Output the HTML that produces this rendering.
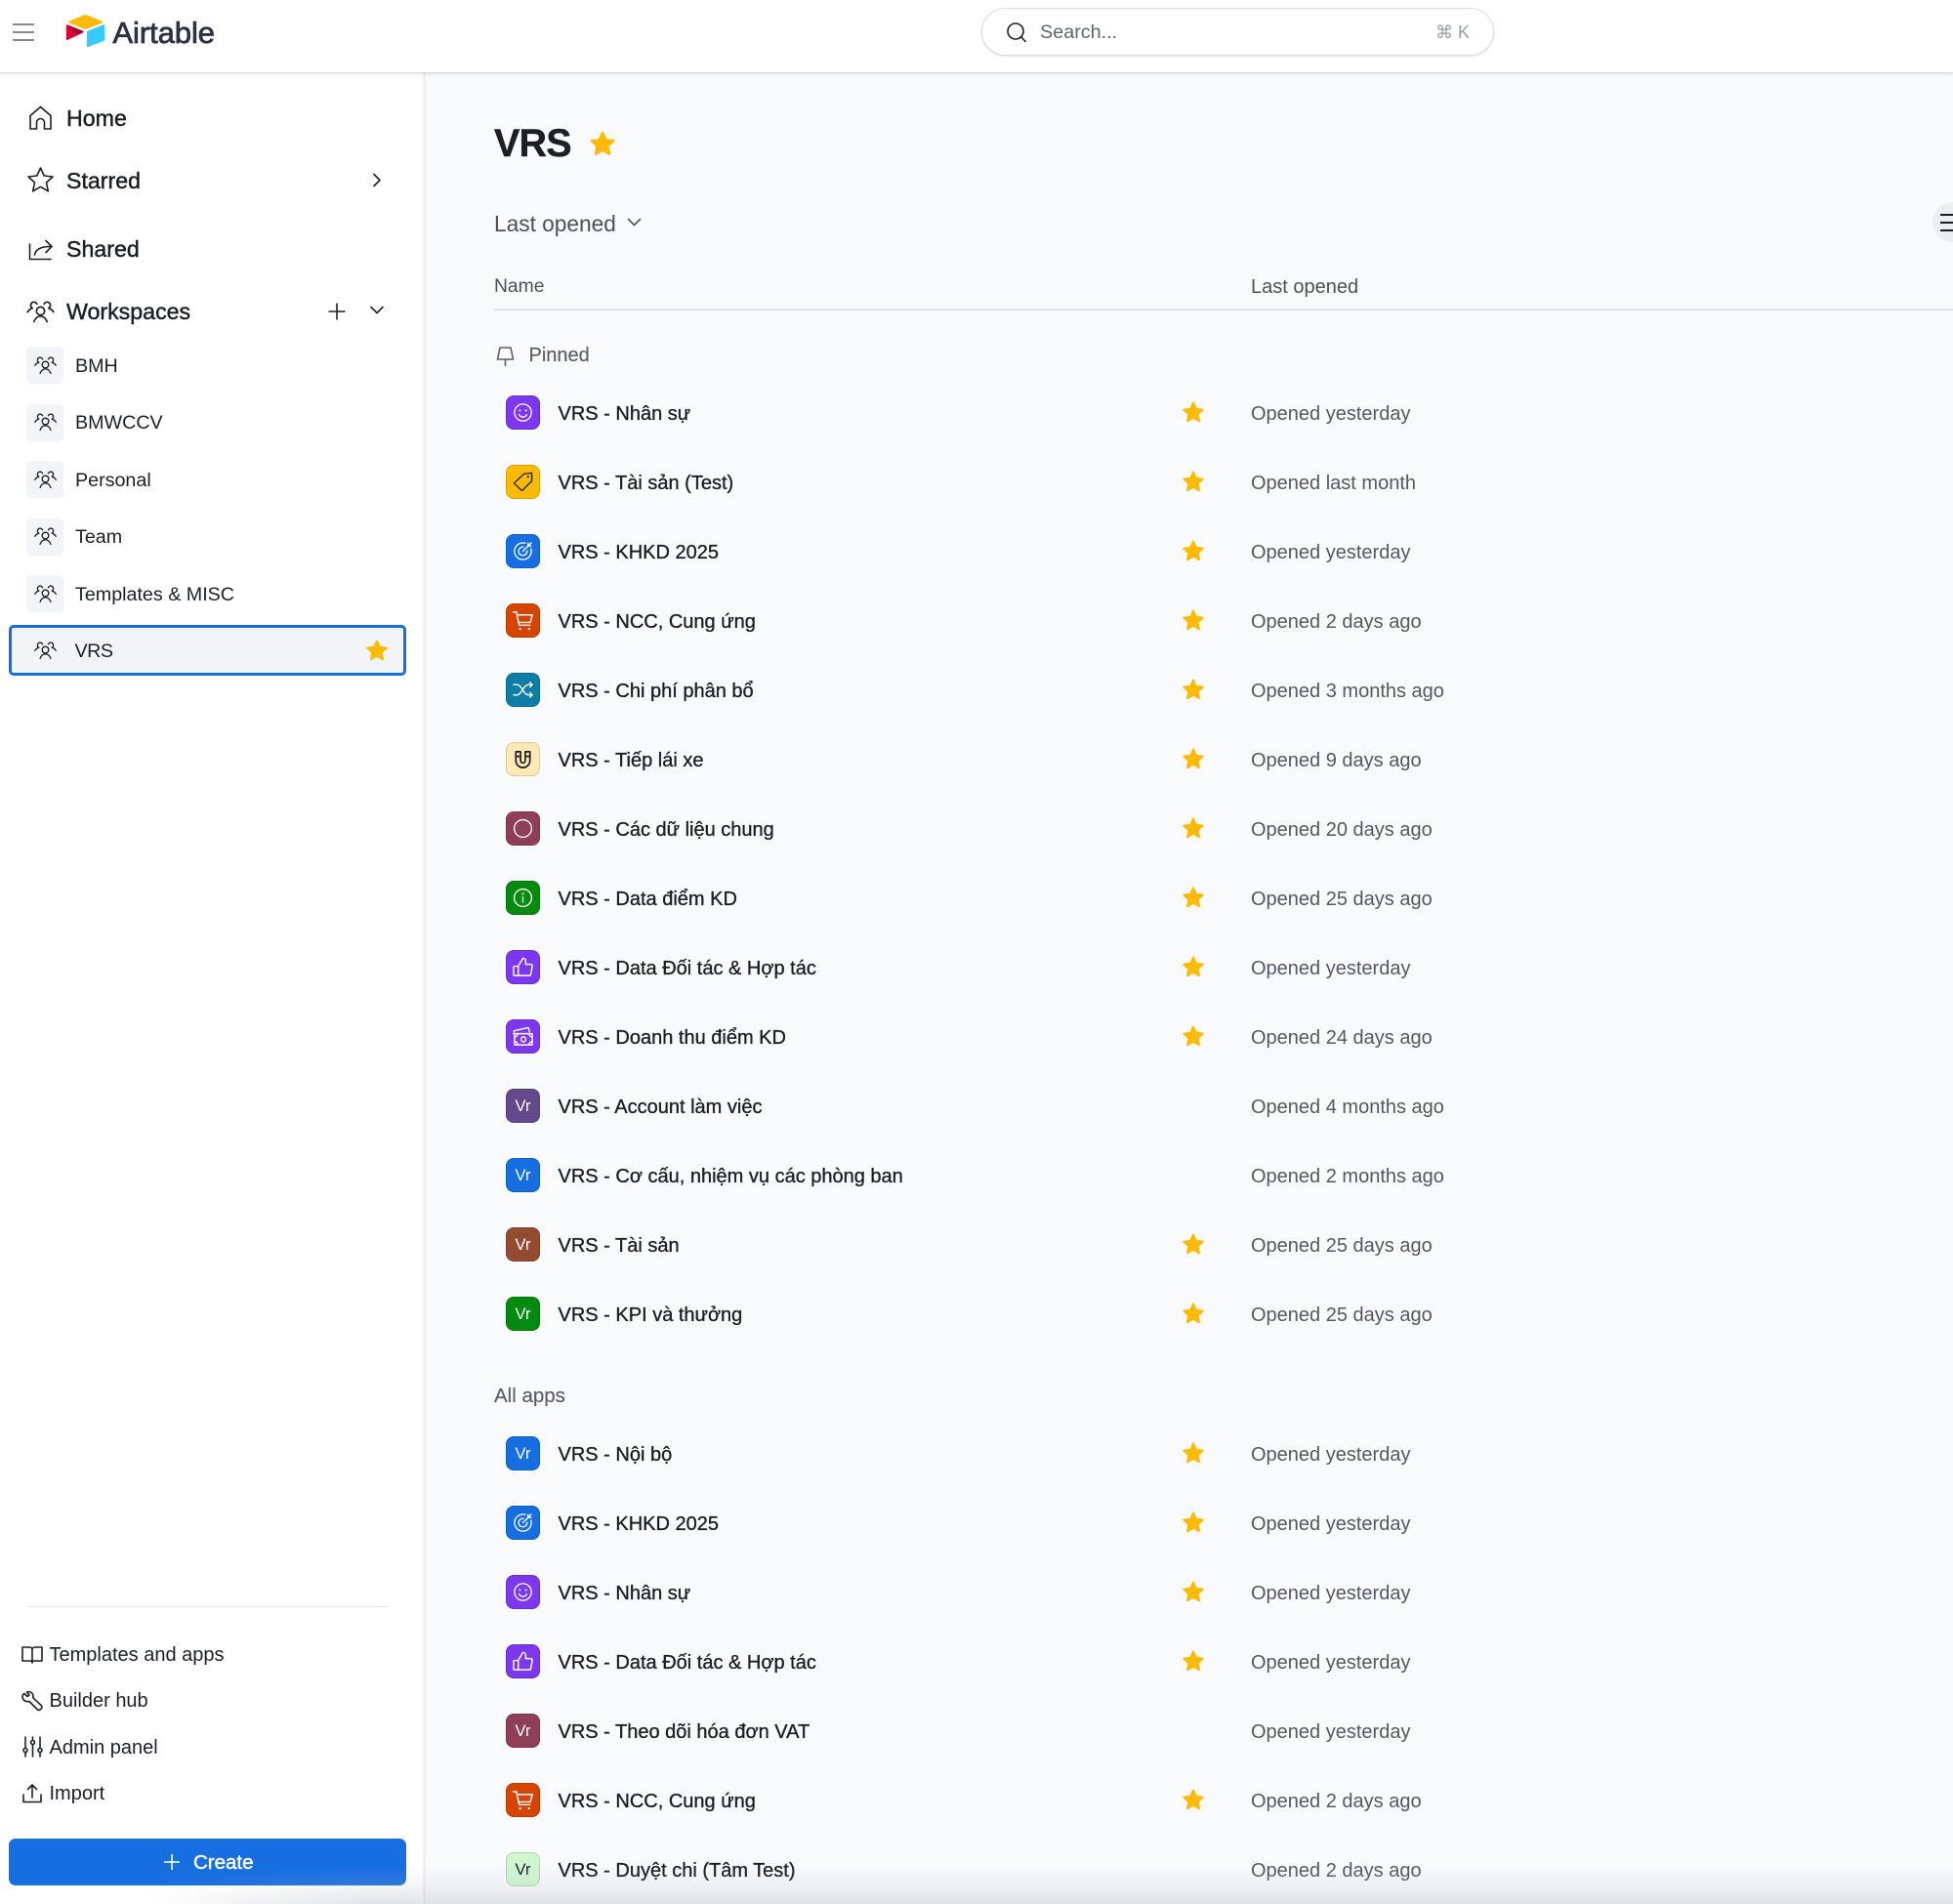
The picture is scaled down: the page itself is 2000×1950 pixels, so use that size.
<!DOCTYPE html>
<html lang="vi"><head><meta charset="utf-8"><title>VRS</title>
<style>
*{box-sizing:border-box}
html,body{margin:0;padding:0}
body{width:2000px;height:1950px;position:relative;overflow:hidden;background:#f9fafc;font-family:"Liberation Sans","Noto Sans CJK JP",sans-serif;color:#1d1f25}
.a{position:absolute;white-space:nowrap}
.v{line-height:30px;height:30px}
.s{fill:none;stroke:currentColor;stroke-width:1.6;stroke-linecap:round;stroke-linejoin:round}
#side{position:absolute;left:0;top:0;width:436px;height:1950px;background:#fff;border-right:3px solid #eef0f2}
#top{position:absolute;left:0;top:0;width:2000px;height:75px;background:#fff;border-bottom:1px solid #dcdde0;box-shadow:0 1px 3px rgba(0,0,0,.1)}
.nav{left:68px;font-size:23.2px;-webkit-text-stroke:.45px #1d1f25}
.w{left:77px;font-size:19.7px}
.tile{position:absolute;left:27px;width:38px;height:38px;border-radius:5px;background:#f2f4f8}
.b{left:50.5px;font-size:20px}
.r{position:absolute;left:0;width:2000px;height:71px}
.t{position:absolute;left:518px;top:18px;width:35px;height:35px;padding-top:2px;border-radius:8px;border:1px solid rgba(0,0,0,.14);box-shadow:0 0 0 1px #fff;color:#fff;display:flex;align-items:center;justify-content:center;font-size:16.5px;font-style:normal}
.t svg{width:23px;height:23px;margin-top:-2px}
.n{position:absolute;left:571.5px;top:22px;line-height:30px;font-size:20px;-webkit-text-stroke:.35px #1d1f25;white-space:nowrap}
.d{position:absolute;left:1281px;top:22px;line-height:30px;font-size:20px;color:#55585f;white-space:nowrap}
.st{position:absolute;left:1210px;top:23px;width:24px;height:24px}
</style></head><body>
<svg width="0" height="0" style="position:absolute">
<defs>
<symbol id="star" viewBox="0 0 24 24"><path fill="#ffba05" stroke="#ffba05" stroke-width="2" stroke-linejoin="round" d="M12 2.5l2.9 6.3 6.8.8-5 4.7 1.3 6.9-6-3.4-6 3.4 1.3-6.9-5-4.7 6.8-.8z"/></symbol>
<symbol id="users" viewBox="0 0 24 24"><g class="s" style="stroke-width:1.3"><circle cx="12" cy="12" r="3.2"/><path d="M6.8 20.5c1-2.8 2.9-4.3 5.2-4.3s4.2 1.500 5.200 4.300"/><path d="M9.200 6.500a2.600 2.600 0 1 0-3.600 3.300c-1.700.4-3 1.400-3.900 3"/><path d="M14.800 6.500a2.600 2.600 0 1 1 3.600 3.300c1.700.4 3 1.400 3.900 3"/></g></symbol>
<symbol id="smile" viewBox="0 0 24 24"><g class="s" style="stroke-width:1.400"><circle cx="12" cy="12" r="9"/><path d="M7.800 14c1 1.900 2.500 2.800 4.200 2.800s3.200-.9 4.200-2.800"/></g><circle cx="8.800" cy="9.800" r="1.100" fill="currentColor"/><circle cx="15.200" cy="9.800" r="1.100" fill="currentColor"/></symbol>
<symbol id="tag" viewBox="0 0 24 24"><path class="s" style="stroke-width:1.400" d="M2.500 13.500L13 3.500l8.500-1v8.500L11 21.500z"/><circle cx="17.500" cy="6.500" r="1.100" fill="currentColor"/></symbol>
<symbol id="target" viewBox="0 0 24 24"><g class="s" style="stroke-width:1.400"><path d="M20.600 9.500A9 9 0 1 1 14.500 3.400"/><path d="M16.400 11.500A4.500 4.500 0 1 1 12.500 7.600"/><path d="M12 12L21 3M17.500 3.500V6.500H20.500"/></g></symbol>
<symbol id="cart" viewBox="0 0 24 24"><g class="s" style="stroke-width:1.500"><path d="M1.500 3H5L8 17H19.500"/><path d="M5.600 6H22L20 14H7.200"/></g><circle cx="9" cy="21" r="1.200" fill="currentColor"/><circle cx="18.500" cy="21" r="1.200" fill="currentColor"/></symbol>
<symbol id="shuffle" viewBox="0 0 24 24"><g class="s" style="stroke-width:1.400"><path d="M2 6.500h3.500c5.500 0 6.500 11 13 11H22"/><path d="M2 17.500h3.500c5.500 0 6.500-11 13-11H22"/><path d="M19.500 4L22 6.500 19.500 9M19.500 15L22 17.500 19.500 20"/></g></symbol>
<symbol id="magnet" viewBox="0 0 24 24"><g class="s" style="stroke-width:1.800"><path d="M4.500 4h5v9.500a2.500 2.500 0 0 0 5 0V4h5v9.500a7.500 7.500 0 0 1-15 0z"/><path d="M4.500 9h5M14.500 9h5"/></g></symbol>
<symbol id="circle" viewBox="0 0 24 24"><circle class="s" cx="12" cy="12" r="9.300" style="stroke-width:1.400"/></symbol>
<symbol id="info" viewBox="0 0 24 24"><g class="s" style="stroke-width:1.400"><circle cx="12" cy="12" r="9.300"/><path d="M12 11v6"/></g><circle cx="12" cy="7.800" r="1.100" fill="currentColor"/></symbol>
<symbol id="thumb" viewBox="0 0 24 24"><g class="s" style="stroke-width:1.500"><rect x="2" y="11" width="5" height="10" rx=".8"/><path d="M7 11l5-8.500c1.800 0 3 1.300 3 3V9h5.500c1 0 1.700 1 1.500 2l-1.500 8.500c-.2 1-.9 1.500-1.700 1.500H7"/></g></symbol>
<symbol id="money" viewBox="0 0 24 24"><g class="s" style="stroke-width:1.500"><path d="M2 9L2.500 6 18 2.500 19 7"/><rect x="3" y="9" width="19" height="12" rx=".8"/><circle cx="12.500" cy="15" r="2.600"/><path d="M3 12.500c2 0 3.500-1.500 3.500-3.500M22 12.500c-2 0-3.500-1.500-3.500-3.500M3 17.500c2 0 3.500 1.500 3.500 3.500M22 17.500c-2 0-3.500 1.500-3.500 3.500"/></g></symbol>
</defs></svg>

<div id="side"></div>
<div id="top"></div>

<!-- header -->
<svg class="a" style="left:13px;top:24px;color:#8a8a8a" width="22" height="18" viewBox="0 0 22 18"><path d="M0 1h22M0 9h22M0 17h22" stroke="currentColor" stroke-width="2"/></svg>
<svg class="a" style="left:67px;top:15px" width="41" height="35" viewBox="0 0 200 170"><path fill="#FFBA05" d="M89.900 2.700L18.100 32.400c-4 1.700-3.900 7.300.1 8.900l72.100 28.600c6.300 2.500 13.400 2.500 19.700 0l72.100-28.600c4-1.600 4.100-7.200.1-8.900L110.400 2.700c-6.500-2.700-13.900-2.700-20.500 0"/><path fill="#39CAFF" d="M106.600 85.600v71.400c0 3.400 3.400 5.700 6.600 4.500l80.400-31.200c1.800-.7 3-2.500 3-4.400V54.500c0-3.400-3.400-5.700-6.600-4.500l-80.400 31.200c-1.800.7-3 2.500-3 4.400"/><path fill="#DC043B" d="M87.800 89.300l-23.900 11.500-2.400 1.200L11.100 126.100c-3.200 1.600-7.300-.8-7.300-4.300V54.700c0-1.300.7-2.400 1.600-3.200.4-.4.8-.7 1.200-.9 1.200-.7 2.900-.9 4.400-.3l76.400 30.300c3.900 1.500 4.200 7 .4 8.700"/><path fill="#000" opacity=".25" d="M87.800 89.300l-23.900 11.500L5.400 51.500c.4-.4.8-.7 1.200-.9 1.200-.7 2.900-.9 4.400-.3l76.400 30.300c3.900 1.500 4.200 7 .4 8.700"/></svg>
<div class="a" style="left:115.500px;top:14.500px;line-height:38px;font-size:30.800px;color:#2d3340;-webkit-text-stroke:.8px #2d3340">Airtable</div>

<div class="a" style="left:1005px;top:8px;width:525px;height:49px;border-radius:25px;background:#fff;border:1px solid #dcdde0;box-shadow:0 1px 2px rgba(0,0,0,.12)"></div>
<svg class="a s" style="left:1030px;top:22px;color:#1d1f25" width="22" height="22" viewBox="0 0 22 22"><circle cx="10" cy="10" r="8"/><path d="M16 16l4 4.500"/></svg>
<div class="a v" style="left:1065px;top:18px;font-size:19.800px;color:#60646e">Search...</div>
<div class="a v" style="left:1470px;top:18px;font-size:18px;color:#9a9da5;font-family:'Liberation Sans','DejaVu Sans',sans-serif">⌘ K</div>

<!-- sidebar nav -->
<svg class="a s" style="left:28px;top:107px" width="27" height="27" viewBox="0 0 27 27"><path d="M3 25V11.500L13.500 2.500 24 11.500V25h-6.500v-6.500a4 4 0 0 0-8 0V25z"/></svg>
<div class="a v nav" style="top:106px">Home</div>
<svg class="a s" style="left:27px;top:170px" width="29" height="28" viewBox="0 0 29 28"><path d="M14.500 2l3.700 8 8.800 1-6.500 6 1.800 8.800-7.800-4.500-7.800 4.500L8.500 17 2 11l8.800-1z"/></svg>
<div class="a v nav" style="top:170px">Starred</div>
<svg class="a s" style="left:379px;top:177px" width="14" height="15" viewBox="0 0 14 15"><path d="M4 1.500l6 6-6 6"/></svg>
<svg class="a s" style="left:28px;top:243px" width="27" height="24" viewBox="0 0 27 24"><path d="M2.500 7V22.500H24"/><path d="M7.500 18c1-5.500 6-8.800 17.500-8.500M19 3.500L25 9.500 19 15.500"/></svg>
<div class="a v nav" style="top:240px">Shared</div>
<svg class="a" style="left:26px;top:303px;color:#1d1f25" width="31" height="31" viewBox="0 0 24 24"><use href="#users"/></svg>
<div class="a v nav" style="top:304px">Workspaces</div>
<svg class="a" style="left:335px;top:309px" width="20" height="20" viewBox="0 0 20 20"><path d="M10 1.500v17M1.500 10h17" stroke="#1d1f25" stroke-width="1.600"/></svg>
<svg class="a s" style="left:378px;top:311px" width="16" height="14" viewBox="0 0 16 14"><path d="M2 3.500l6 6 6-6"/></svg>

<!-- workspaces -->
<div class="tile" style="top:355px"></div><svg class="a" style="left:34px;top:361px" width="25" height="25" viewBox="0 0 24 24"><use href="#users"/></svg><div class="a v w" style="top:360px">BMH</div>
<div class="tile" style="top:414px"></div><svg class="a" style="left:34px;top:419px" width="25" height="25" viewBox="0 0 24 24"><use href="#users"/></svg><div class="a v w" style="top:418px">BMWCCV</div>
<div class="tile" style="top:472px"></div><svg class="a" style="left:34px;top:478px" width="25" height="25" viewBox="0 0 24 24"><use href="#users"/></svg><div class="a v w" style="top:477px">Personal</div>
<div class="tile" style="top:531px"></div><svg class="a" style="left:34px;top:536px" width="25" height="25" viewBox="0 0 24 24"><use href="#users"/></svg><div class="a v w" style="top:535px">Team</div>
<div class="tile" style="top:589px"></div><svg class="a" style="left:34px;top:595px" width="25" height="25" viewBox="0 0 24 24"><use href="#users"/></svg><div class="a v w" style="top:594px">Templates &amp; MISC</div>
<div class="a" style="left:9px;top:640px;width:407px;height:52px;background:#f2f4f8;border:3px solid #166ee1;border-radius:5px"></div>
<svg class="a" style="left:34px;top:653px" width="25" height="25" viewBox="0 0 24 24"><use href="#users"/></svg><div class="a v w" style="top:652px;left:76.500px;letter-spacing:-.5px">VRS</div>
<svg class="a" style="left:374px;top:654px" width="24" height="24"><use href="#star"/></svg>

<!-- sidebar bottom -->
<div class="a" style="left:27px;top:1645px;width:371px;height:1px;background:#e3e4e7"></div>
<svg class="a s" style="left:22px;top:1685px" width="22" height="19" viewBox="0 0 22 19"><path d="M1 2h7c1.800 0 3 1 3 2.500 0-1.500 1.200-2.500 3-2.500h7v14h-8c-1.200 0-2 .7-2 2 0-1.300-.8-2-2-2H1zM11 4.500V18"/></svg>
<div class="a v b" style="top:1680px">Templates and apps</div>
<svg class="a s" style="left:22px;top:1731px" width="22" height="22" viewBox="0 0 22 22"><path d="M3 3.500L6 6.500 8 5 5.500 2c2.500-1 5.500.2 6.300 2.800.3 1 .3 2 0 2.900L20.500 16a1.800 1.800 0 0 1 0 2.500l-1.500 1.500a1.800 1.800 0 0 1-2.500 0L8 11.500c-3.500 1-7-1.500-7-5 0-1 .3-2 2-3z"/></svg>
<div class="a v b" style="top:1727px">Builder hub</div>
<svg class="a s" style="left:23px;top:1778px" width="21" height="22" viewBox="0 0 21 22"><path d="M3 1v11M3 17v4M10.500 1v3M10.500 9v12M18 1v11M18 17v4"/><circle cx="3" cy="14.500" r="2"/><circle cx="10.500" cy="6.500" r="2"/><circle cx="18" cy="14.500" r="2"/></svg>
<div class="a v b" style="top:1774.500px">Admin panel</div>
<svg class="a s" style="left:22px;top:1826px" width="22" height="21" viewBox="0 0 22 21"><path d="M2 12v7.500h18V12M11 15V2M6.500 6.500L11 2l4.500 4.500"/></svg>
<div class="a v b" style="top:1822px">Import</div>
<div class="a" style="left:9px;top:1883px;width:407px;height:48px;border-radius:7px;background:#166ee1"></div>
<svg class="a" style="left:167px;top:1898px" width="18" height="18" viewBox="0 0 18 18"><path d="M9 1v16M1 9h16" stroke="#fff" stroke-width="1.600"/></svg>
<div class="a v" style="left:198px;top:1893px;font-size:20.500px;color:#fff;-webkit-text-stroke:.5px #fff">Create</div>

<!-- main -->
<div class="a" style="left:506px;top:122px;line-height:50px;font-size:39.500px;font-weight:700;letter-spacing:-.8px;-webkit-text-stroke:.4px #1d1f25">VRS</div>
<svg class="a" style="left:603px;top:133px" width="28" height="28"><use href="#star"/></svg>
<div class="a v" style="left:506px;top:214px;font-size:22.700px;color:#4d5058">Last opened</div>
<svg class="a s" style="left:641px;top:221px;color:#4d5058" width="17" height="14" viewBox="0 0 17 14"><path d="M2.500 3.500l6 6 6-6"/></svg>
<div class="a" style="left:1979px;top:207px;width:40px;height:41px;border-radius:20px;background:#eceef0"></div>
<svg class="a" style="left:1987px;top:218px" width="13" height="20"><path d="M0 2h13M0 10h13M0 18h13" stroke="#1d1f25" stroke-width="2"/></svg>
<div class="a v" style="left:506px;top:279px;font-size:19.300px;color:#4d5058">Name</div>
<div class="a v" style="left:1281px;top:278.500px;font-size:20px;color:#4d5058">Last opened</div>
<div class="a" style="left:506px;top:316px;width:1494px;height:2px;background:#e1e3e6"></div>
<svg class="a s" style="left:507px;top:354px;color:#5a5f6a" width="21" height="21" viewBox="0 0 21 21"><path d="M5 2h11l2.500 12H2.500zM10.500 14V20.500"/></svg>
<div class="a v" style="left:541.500px;top:349px;font-size:20px;color:#5a5f6a;-webkit-text-stroke:.2px #5a5f6a">Pinned</div>

<div class="r" style="top:387px"><i class="t" style="background:#7c37ef"><svg><use href="#smile"/></svg></i><div class="n">VRS - Nhân sự</div><svg class="st"><use href="#star"/></svg><div class="d">Opened yesterday</div></div>
<div class="r" style="top:458px"><i class="t" style="background:#ffba05;color:#1d1f25"><svg><use href="#tag"/></svg></i><div class="n">VRS - Tài sản (Test)</div><svg class="st"><use href="#star"/></svg><div class="d">Opened last month</div></div>
<div class="r" style="top:529px"><i class="t" style="background:#166ee1"><svg><use href="#target"/></svg></i><div class="n">VRS - KHKD 2025</div><svg class="st"><use href="#star"/></svg><div class="d">Opened yesterday</div></div>
<div class="r" style="top:600px"><i class="t" style="background:#d54401"><svg><use href="#cart"/></svg></i><div class="n">VRS - NCC, Cung ứng</div><svg class="st"><use href="#star"/></svg><div class="d">Opened 2 days ago</div></div>
<div class="r" style="top:671px"><i class="t" style="background:#0f7ea6"><svg><use href="#shuffle"/></svg></i><div class="n">VRS - Chi phí phân bổ</div><svg class="st"><use href="#star"/></svg><div class="d">Opened 3 months ago</div></div>
<div class="r" style="top:742px"><i class="t" style="background:#ffeab6;color:#1d1f25"><svg><use href="#magnet"/></svg></i><div class="n">VRS - Tiếp lái xe</div><svg class="st"><use href="#star"/></svg><div class="d">Opened 9 days ago</div></div>
<div class="r" style="top:813px"><i class="t" style="background:#8f3f58"><svg><use href="#circle"/></svg></i><div class="n">VRS - Các dữ liệu chung</div><svg class="st"><use href="#star"/></svg><div class="d">Opened 20 days ago</div></div>
<div class="r" style="top:884px"><i class="t" style="background:#048a0e"><svg><use href="#info"/></svg></i><div class="n">VRS - Data điểm KD</div><svg class="st"><use href="#star"/></svg><div class="d">Opened 25 days ago</div></div>
<div class="r" style="top:955px"><i class="t" style="background:#7c37ef"><svg><use href="#thumb"/></svg></i><div class="n">VRS - Data Đối tác &amp; Hợp tác</div><svg class="st"><use href="#star"/></svg><div class="d">Opened yesterday</div></div>
<div class="r" style="top:1026px"><i class="t" style="background:#7c37ef"><svg><use href="#money"/></svg></i><div class="n">VRS - Doanh thu điểm KD</div><svg class="st"><use href="#star"/></svg><div class="d">Opened 24 days ago</div></div>
<div class="r" style="top:1097px"><i class="t" style="background:#644a8d">Vr</i><div class="n">VRS - Account làm việc</div><div class="d">Opened 4 months ago</div></div>
<div class="r" style="top:1168px"><i class="t" style="background:#166ee1">Vr</i><div class="n">VRS - Cơ cấu, nhiệm vụ các phòng ban</div><div class="d">Opened 2 months ago</div></div>
<div class="r" style="top:1239px"><i class="t" style="background:#944b30">Vr</i><div class="n">VRS - Tài sản</div><svg class="st"><use href="#star"/></svg><div class="d">Opened 25 days ago</div></div>
<div class="r" style="top:1310px"><i class="t" style="background:#048a0e">Vr</i><div class="n">VRS - KPI và thưởng</div><svg class="st"><use href="#star"/></svg><div class="d">Opened 25 days ago</div></div>

<div class="a v" style="left:506px;top:1415px;font-size:20.500px;color:#5a5f6a;-webkit-text-stroke:.2px #5a5f6a">All apps</div>

<div class="r" style="top:1453px"><i class="t" style="background:#166ee1">Vr</i><div class="n">VRS - Nội bộ</div><svg class="st"><use href="#star"/></svg><div class="d">Opened yesterday</div></div>
<div class="r" style="top:1524px"><i class="t" style="background:#166ee1"><svg><use href="#target"/></svg></i><div class="n">VRS - KHKD 2025</div><svg class="st"><use href="#star"/></svg><div class="d">Opened yesterday</div></div>
<div class="r" style="top:1595px"><i class="t" style="background:#7c37ef"><svg><use href="#smile"/></svg></i><div class="n">VRS - Nhân sự</div><svg class="st"><use href="#star"/></svg><div class="d">Opened yesterday</div></div>
<div class="r" style="top:1666px"><i class="t" style="background:#7c37ef"><svg><use href="#thumb"/></svg></i><div class="n">VRS - Data Đối tác &amp; Hợp tác</div><svg class="st"><use href="#star"/></svg><div class="d">Opened yesterday</div></div>
<div class="r" style="top:1737px"><i class="t" style="background:#8f3f58">Vr</i><div class="n">VRS - Theo dõi hóa đơn VAT</div><div class="d">Opened yesterday</div></div>
<div class="r" style="top:1808px"><i class="t" style="background:#d54401"><svg><use href="#cart"/></svg></i><div class="n">VRS - NCC, Cung ứng</div><svg class="st"><use href="#star"/></svg><div class="d">Opened 2 days ago</div></div>
<div class="r" style="top:1879px"><i class="t" style="background:#cff5d1;color:#1d1f25">Vr</i><div class="n">VRS - Duyệt chi (Tâm Test)</div><div class="d">Opened 2 days ago</div></div>

<!-- bottom vignette -->
<div class="a" style="left:150px;top:1910px;width:1850px;height:40px;background:linear-gradient(to bottom,rgba(190,192,197,0),rgba(190,192,197,.16) 55%,rgba(190,192,197,.42));-webkit-mask-image:linear-gradient(to right,transparent,#000 220px);mask-image:linear-gradient(to right,transparent,#000 220px)"></div>
</body></html>
